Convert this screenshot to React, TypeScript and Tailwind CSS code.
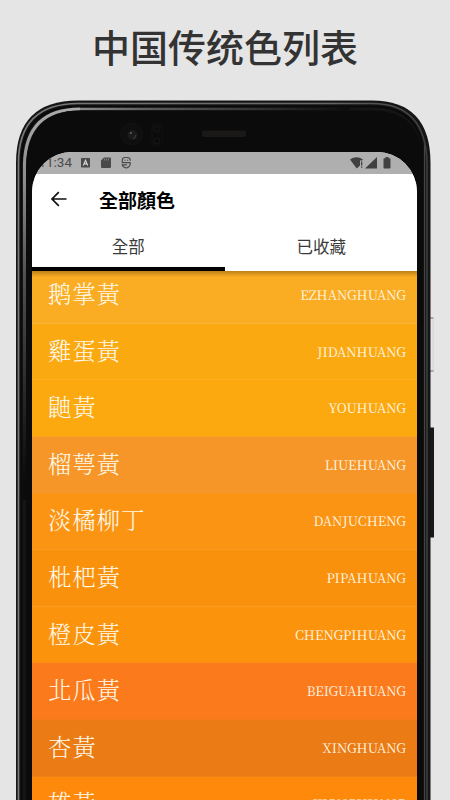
import { clsx } from 'clsx';

interface ColorItem {
  name: string;
  pinyin: string;
  row: string;
}

const colors: ColorItem[] = [
  { name: '鹅掌黃', pinyin: 'EZHANGHUANG', row: 'bg-[#faac22] border-[#fbb637]' },
  { name: '雞蛋黃', pinyin: 'JIDANHUANG', row: 'bg-[#fba911] border-[#fcae1f]' },
  { name: '鼬黃', pinyin: 'YOUHUANG', row: 'bg-[#fba90f] border-[#fba31c]' },
  { name: '榴萼黃', pinyin: 'LIUEHUANG', row: 'bg-[#f69629] border-[#f7971f]' },
  { name: '淡橘柳丁', pinyin: 'DANJUCHENG', row: 'bg-[#fb9413] border-[#fb9c22]' },
  { name: '枇杷黃', pinyin: 'PIPAHUANG', row: 'bg-[#fa910c] border-[#fb9b22]' },
  { name: '橙皮黃', pinyin: 'CHENGPIHUANG', row: 'bg-[#fb930d] border-[#fa8d12]' },
  { name: '北瓜黃', pinyin: 'BEIGUAHUANG', row: 'bg-[#fb7a1c] border-[#f47b1b]' },
  { name: '杏黃', pinyin: 'XINGHUANG', row: 'bg-[#eb7b14] border-[#f08318]' },
  { name: '雄黃', pinyin: 'XIONGHUANG', row: 'bg-[#ff890b] border-[#ff890b]' },
];

const DeviceFrame = () => (
  <svg className="absolute inset-0" width="450" height="800" viewBox="0 0 450 800" fill="none">
    <defs>
      <linearGradient id="shineTop" x1="50" y1="0" x2="350" y2="0" gradientUnits="userSpaceOnUse">
        <stop offset="0" stopColor="#9c9c9c" />
        <stop offset="0.35" stopColor="#585a58" />
        <stop offset="1" stopColor="#0c0c0c" />
      </linearGradient>
      <linearGradient id="shineSide" x1="0" y1="110" x2="0" y2="480" gradientUnits="userSpaceOnUse">
        <stop offset="0" stopColor="#aaaaaa" />
        <stop offset="0.2" stopColor="#8a8a8a" />
        <stop offset="0.45" stopColor="#505050" />
        <stop offset="1" stopColor="#0b0b0b" />
      </linearGradient>
      <linearGradient id="edge" x1="16" y1="0" x2="430" y2="0" gradientUnits="userSpaceOnUse">
        <stop offset="0" stopColor="#777b78" />
        <stop offset="0.75" stopColor="#656966" />
        <stop offset="1" stopColor="#3a3a3a" />
      </linearGradient>
      <linearGradient id="button" x1="430" y1="0" x2="434" y2="0" gradientUnits="userSpaceOnUse">
        <stop offset="0" stopColor="#f2f2f2" />
        <stop offset="0.5" stopColor="#e0e0e0" />
        <stop offset="1" stopColor="#d8d8d8" />
      </linearGradient>
    </defs>
    {/* side buttons */}
    <rect x="429" y="317" width="5" height="55" rx="1" fill="url(#button)" />
    <path d="M430 318h3.500M430 371h3.500" stroke="#a8a8a8" strokeWidth="2" />
    <rect x="429" y="427.500" width="5" height="110" fill="#191919" />
    {/* body */}
    <path d="M16 810V163Q16 100.500 78 100.500H372Q430.500 100.500 430.500 163V810Z" fill="#151515" />
    <path d="M18.500 810V163Q18.500 103.500 78 103.500H372Q426 103.500 427 163V810" stroke="url(#edge)" strokeWidth="1.700" />
    <path d="M21.500 810V163Q21.500 106.500 78 106.500H372Q424 106.500 424 163V810" stroke="#0a0a0a" strokeWidth="2" />
    <path d="M24.500 500V164Q26 109 80 109" stroke="url(#shineSide)" strokeWidth="3.200" />
    <path d="M80 109H350" stroke="url(#shineTop)" strokeWidth="2.400" />
    <path d="M424.500 145V810" stroke="#444" strokeWidth="1.300" />
    <path d="M26 810V166Q28 110.500 80 110.500H372Q423 110.500 423 164V810Z" fill="#0b0b0b" />
    {/* camera and speaker */}
    <circle cx="131.500" cy="134" r="11" fill="#0f0f0f" stroke="#131313" />
    <circle cx="132.500" cy="135" r="5" fill="#1a1a1a" />
    <circle cx="130.800" cy="133" r="1" fill="#666" />
    <path d="M136 135q-.5 3-3 4" stroke="#444" />
    <rect x="152" y="124" width="10" height="22" rx="4" stroke="#121212" />
    <circle cx="157" cy="129" r="3" stroke="#161616" />
    <circle cx="157" cy="141" r="3" stroke="#161616" />
    <rect x="202" y="130.500" width="44" height="6.500" rx="3" fill="#1b1917" />
  </svg>
);

const StatusBar = () => (
  <div className="relative flex h-[21.500px] shrink-0 items-center bg-[#afafaf] text-[#4a4a4a]">
    <span className="ml-[6px] w-[34px] text-right font-['Roboto',sans-serif] text-[13.500px] leading-none whitespace-nowrap">
      11:34
    </span>
    <svg className="ml-[8px]" width="58" height="14" viewBox="0 0 58 14" fill="none">
      <rect x="1" y="2" width="9" height="9.500" rx="0.800" fill="#4a4a4a" />
      <path d="M3.300 9.500 5.500 4.200 7.700 9.500M4.200 7.800h2.600" stroke="#d0d0d0" strokeWidth="1.200" />
      <path d="M24 1.500h6q1 0 1 1V11q0 1-1 1h-8q-1 0-1-1V4.500Z" fill="#4a4a4a" />
      <path d="M24.500 2.500v2M26.500 2.500v2M28.500 2.500v2" stroke="#8a8a8a" strokeWidth="0.800" />
      {/* shield shaped S */}
      <path
        d="M50.200 4.300Q50.200 1.500 47.500 1.500H45Q42.300 1.500 42.300 4.300V6.600H50.200V8.200Q49.800 11.300 46.300 12 42.800 11.300 42.300 8.900H46.500M45 4.200h.1M47.600 4.200h.1"
        stroke="#4a4a4a"
        strokeWidth="1.200"
        strokeLinecap="round"
      />
    </svg>
    <svg className="mr-[25px] ml-auto" width="43" height="14" viewBox="0 0 43 14" fill="#404040">
      <path d="M1 3.500Q7.500-1 14 3.500L13 4.500h-2v5L7.700 12.500Z" />
      <path d="M12 5.500h1.300v4H12ZM12 10.500h1.300v1.300H12ZM28 1v11.500H16Z" />
      <path d="M36.500 1h3v1.200h1q1 0 1 1v8.300q0 1-1 1h-5q-1 0-1-1V3.200q0-1 1-1h1Z" />
    </svg>
  </div>
);

const AppBar = () => (
  <header className="flex h-[51px] shrink-0 items-center bg-white text-black">
    <svg className="ml-[17px]" width="20" height="20" viewBox="0 0 20 20" fill="none">
      <path d="M17.500 10H3M9.800 3.200 3 10l6.800 6.800" stroke="#111" strokeWidth="1.700" />
    </svg>
    <h2 className="ml-[30px] pt-[1px] text-[19px] leading-none font-bold">全部顏色</h2>
  </header>
);

const Tabs = () => (
  <div className="grid h-[46px] shrink-0 grid-cols-2 bg-white text-[16.500px] text-[#3a3a3a]">
    <div className="flex items-center justify-center border-b-[4px] border-black pt-[2px]">全部</div>
    <div className="flex items-center justify-center pt-[2px] pb-[4px] pl-px">已收藏</div>
  </div>
);

const ColorRow = ({ item, first }: { item: ColorItem; first: boolean }) => (
  <li
    className={clsx(
      "flex shrink-0 items-center justify-between border-b pr-[11px] pl-[16px] text-[#fff8e8] font-['Noto_Serif_CJK_TC','Noto_Serif_CJK_SC','Liberation_Serif','Noto_Sans_CJK_TC',serif]",
      first ? 'h-[53.300px] pb-[6px]' : 'h-[56.600px] pb-[2.500px]',
      item.row
    )}
  >
    <span className="text-[23.500px] leading-none font-light tracking-[0.8px]">{item.name}</span>
    <span className="pt-[1.500px] text-[13px] leading-none">{item.pinyin}</span>
  </li>
);

const App = () => {
  return (
    <main className="relative h-[800px] w-[450px] overflow-hidden bg-[#e5e5e5] font-['Noto_Sans_CJK_TC',sans-serif]">
      <DeviceFrame />
      <div className="relative flex h-full flex-col">
        <h1 className="h-[152px] shrink-0 pt-[18px] text-center font-['Noto_Sans_CJK_SC',sans-serif] text-[38px] leading-[56px] font-medium text-[#333]">
          中国传统色列表
        </h1>
        <div className="ml-[32px] flex min-h-0 w-[385px] flex-1 flex-col overflow-hidden rounded-t-[40px] bg-white">
          <StatusBar />
          <AppBar />
          <Tabs />
          <div className="relative min-h-0 flex-1 overflow-hidden">
            <ul className="flex flex-col">
              {colors.map((item, i) => (
                <ColorRow key={item.pinyin} item={item} first={i === 0} />
              ))}
            </ul>
            {/* tab bar shadow */}
            <div className="absolute inset-x-0 top-0 h-[6px] bg-gradient-to-b from-black/25 to-transparent" />
          </div>
        </div>
      </div>
    </main>
  );
};

export default App;
